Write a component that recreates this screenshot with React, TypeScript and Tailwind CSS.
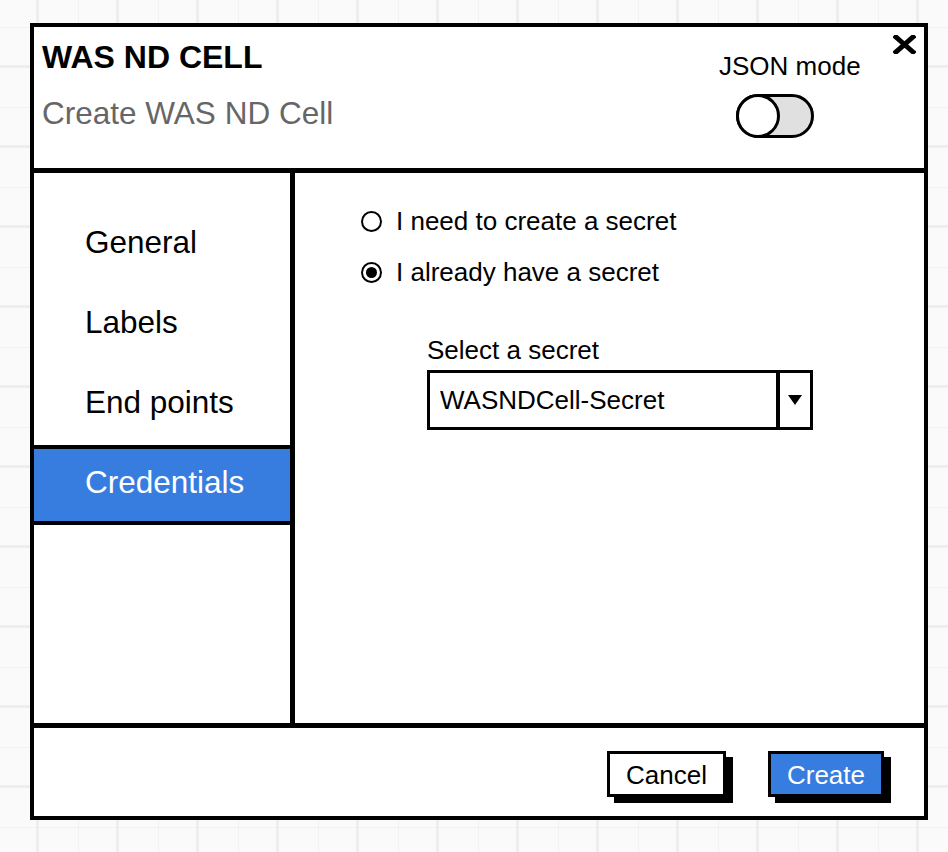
import React, { useState } from 'react';

const navItems = ['General', 'Labels', 'End points', 'Credentials'];

// --- SMALL PIECES ---
const Radio = ({ checked, label, onClick }: { checked: boolean; label: string; onClick: () => void }) => (
  <button onClick={onClick} className="flex items-center gap-[14px] text-left">
    <span className="w-[21px] h-[21px] rounded-full border-2 border-black flex items-center justify-center bg-white">
      {checked && <span className="w-[11px] h-[11px] rounded-full bg-black" />}
    </span>
    <span className="text-[26px] text-black">{label}</span>
  </button>
);

const Toggle = () => (
  <div className="relative w-[78px] h-[44px] rounded-full border-[3px] border-black bg-[#e0e0e0]">
    <div className="absolute -left-[3px] -top-[3px] w-[44px] h-[44px] rounded-full border-[3px] border-black bg-white" />
  </div>
);

export default function App() {
  const [active, setActive] = useState('Credentials');
  const [hasSecret, setHasSecret] = useState(true);

  return (
    <div
      className="min-h-screen w-full pt-[23px] pl-[30px] leading-[normal] font-['Liberation_Sans',Arial,sans-serif] bg-[#fafafa] bg-[linear-gradient(to_right,#eeeeee_3px,transparent_3px),linear-gradient(to_bottom,#eeeeee_3px,transparent_3px),linear-gradient(to_right,#f2f2f2_1px,transparent_1px),linear-gradient(to_bottom,#f2f2f2_1px,transparent_1px)] bg-[size:80px_80px,80px_80px,40px_40px,40px_40px] bg-[position:36px_0,0_65px,38px_0,0_27px]"
    >
      <div className="w-[898px] h-[797px] border-[4px] border-black bg-white flex flex-col">
        {/* Header */}
        <div className="h-[146px] shrink-0 border-b-[5px] border-black flex pl-[8px] pr-[8px]">
          <div className="flex-1">
            <h1 className="mt-[12px] text-[32px] font-bold text-black">WAS ND CELL</h1>
            <p className="mt-[19px] text-[31.5px] text-[#666666]">Create WAS ND Cell</p>
          </div>
          <div className="w-[141px] mt-[24px]">
            <div className="text-[26px] text-black whitespace-nowrap">JSON mode</div>
            <div className="ml-[17px] mt-[12px]">
              <Toggle />
            </div>
          </div>
          <button className="ml-[33px] mt-[8px] self-start">
            <svg width="23" height="19" viewBox="0 0 23 19">
              <path d="M3 2 L20 17 M20 2 L3 17" stroke="#000" strokeWidth="5" strokeLinecap="square" />
            </svg>
          </button>
        </div>

        {/* Body */}
        <div className="flex-1 flex min-h-0">
          <div className="w-[261px] shrink-0 border-r-[5px] border-black pt-[32px]">
            {navItems.map((item) => {
              const isActive = active === item;
              return (
                <button
                  key={item}
                  onClick={() => setActive(item)}
                  className={`w-full h-[80px] flex items-center pl-[51px] pb-[6px] text-[31.5px] text-left ${
                    isActive ? 'bg-[#377de0] text-white border-y-[4px] border-black' : 'text-black'
                  }`}
                >
                  {item}
                </button>
              );
            })}
          </div>

          <div className="flex-1 pt-[33px] pl-[66px]">
            <div className="flex flex-col gap-[20px]">
              <Radio checked={!hasSecret} label="I need to create a secret" onClick={() => setHasSecret(false)} />
              <Radio checked={hasSecret} label="I already have a secret" onClick={() => setHasSecret(true)} />
            </div>
            <div className="ml-[66px] mt-[47px]">
              <div className="text-[26px] text-black">Select a secret</div>
              <div className="mt-[4px] w-[386px] h-[60px] border-[3px] border-black flex">
                <div className="flex-1 flex items-center pl-[10px] text-[26px] text-black">WASNDCell-Secret</div>
                <div className="w-[34px] border-l-[4px] border-black flex items-center justify-center">
                  <svg width="14" height="10" viewBox="0 0 14 10">
                    <path d="M0 0 H14 L7 10 Z" fill="#000" />
                  </svg>
                </div>
              </div>
            </div>
          </div>
        </div>

        {/* Footer */}
        <div className="h-[93px] shrink-0 border-t-[5px] border-black flex justify-end items-start pt-[23px] pr-[40px] gap-[42px]">
          <button className="w-[119px] h-[46px] pt-[3px] border-[3px] border-black bg-white text-[26px] text-black shadow-[7px_6px_0_#000]">
            Cancel
          </button>
          <button className="w-[116px] h-[46px] pt-[3px] border-[3px] border-black bg-[#377de0] text-[26px] text-white shadow-[7px_6px_0_#000]">
            Create
          </button>
        </div>
      </div>
    </div>
  );
}
